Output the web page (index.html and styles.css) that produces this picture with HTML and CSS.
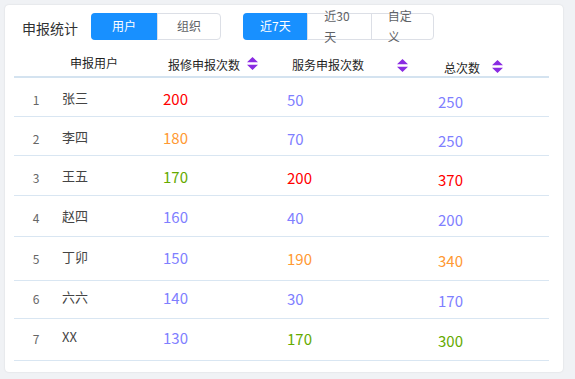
FILE: index.html
```html
<!DOCTYPE html>
<html lang="zh">
<head>
<meta charset="utf-8">
<link rel="stylesheet" href="styles.css">
</head>
<body>
<div class="card">
  <div class="toolbar">
    <div class="title">申报统计</div>
    <div class="seg seg-type">
      <div class="seg-btn active">用户</div>
      <div class="seg-btn">组织</div>
    </div>
    <div class="seg seg-range">
      <div class="seg-btn active">近7天</div>
      <div class="seg-btn">近30天</div>
      <div class="seg-btn">自定义</div>
    </div>
  </div>
  <div class="table">
    <div class="thead">
      <div class="th c-idx"></div>
      <div class="th c-name">申报用户</div>
      <div class="th c-a">报修申报次数<svg class="sort" viewBox="0 0 11 13"><path d="M5.5 0 L11 5.2 L0 5.2 Z M0 7.8 L11 7.8 L5.5 13 Z"/></svg></div>
      <div class="th c-b">服务申报次数<svg class="sort" viewBox="0 0 11 13"><path d="M5.5 0 L11 5.2 L0 5.2 Z M0 7.8 L11 7.8 L5.5 13 Z"/></svg></div>
      <div class="th c-c">总次数<svg class="sort" viewBox="0 0 11 13"><path d="M5.5 0 L11 5.2 L0 5.2 Z M0 7.8 L11 7.8 L5.5 13 Z"/></svg></div>
    </div>
    <div class="row">
      <div class="td c-idx">1</div><div class="td c-name">张三</div>
      <div class="td c-a red">200</div><div class="td c-b blue">50</div><div class="td c-c blue">250</div>
    </div>
    <div class="row">
      <div class="td c-idx">2</div><div class="td c-name">李四</div>
      <div class="td c-a orange">180</div><div class="td c-b blue">70</div><div class="td c-c blue">250</div>
    </div>
    <div class="row">
      <div class="td c-idx">3</div><div class="td c-name">王五</div>
      <div class="td c-a green">170</div><div class="td c-b red">200</div><div class="td c-c red">370</div>
    </div>
    <div class="row">
      <div class="td c-idx">4</div><div class="td c-name">赵四</div>
      <div class="td c-a blue">160</div><div class="td c-b blue">40</div><div class="td c-c blue">200</div>
    </div>
    <div class="row">
      <div class="td c-idx">5</div><div class="td c-name">丁卯</div>
      <div class="td c-a blue">150</div><div class="td c-b orange">190</div><div class="td c-c orange">340</div>
    </div>
    <div class="row">
      <div class="td c-idx">6</div><div class="td c-name">六六</div>
      <div class="td c-a blue">140</div><div class="td c-b blue">30</div><div class="td c-c blue">170</div>
    </div>
    <div class="row">
      <div class="td c-idx">7</div><div class="td c-name">XX</div>
      <div class="td c-a blue">130</div><div class="td c-b green">170</div><div class="td c-c green">300</div>
    </div>
  </div>
</div>
</body>
</html>
```
FILE: styles.css
```css
* { box-sizing: border-box; }
html, body { margin: 0; padding: 0; }
body {
  background: #f0f2f5;
  font-family: "Noto Sans CJK SC", "Noto Sans", sans-serif;
  padding: 5px;
}
.card {
  width: 558px;
  height: 367px;
  background: #fff;
  border-radius: 4px;
  box-shadow: 0 0 2px rgba(0, 0, 0, 0.12);
  padding: 8px 14px 0 9px;
}
.toolbar {
  display: flex;
  align-items: center;
  height: 27px;
}
.title {
  margin-left: 8px;
  margin-top: 3px;
  font-size: 14px;
  color: #303133;
  width: 69px;
}
.seg {
  display: flex;
  height: 27px;
  border: 1px solid #dcdfe6;
  border-radius: 4px;
  overflow: visible;
}
.seg-type { width: 130px; }
.seg-range { margin-left: 22px; width: 191px; }
.seg-btn {
  display: flex;
  align-items: center;
  font-size: 12px;
  line-height: 20.5px;
  color: #606266;
  border-left: 1px solid #dcdfe6;
}
.seg-btn:first-child { border-left: none; }
.seg-btn.active {
  background: #1890ff;
  color: #fff;
  margin: -1px 0 -1px -1px;
  border-radius: 4px 0 0 4px;
}
.seg-type .seg-btn { justify-content: center; }
.seg-type .seg-btn.active { width: 67px; }
.seg-type .seg-btn:last-child { width: 64px; }
.seg-range .seg-btn {
  width: 64px;
  padding: 0 15px 0 16px;
}
.seg-range .seg-btn.active { width: 65px; padding-left: 17px; }
.seg-range .seg-btn:last-child { width: 63px; }

.table { width: 535px; }
.thead {
  display: flex;
  height: 38px;
  border-bottom: 2px solid #d4e3f0;
}
.row {
  display: flex;
  height: 39px;
  border-bottom: 1px solid #d9e6f2;
}
.row:nth-child(4) { height: 40px; }
.row:nth-child(5) { height: 41px; }
.row:nth-child(6) { height: 44px; }
.row:nth-child(7) { height: 38px; }
.row:nth-child(8) { height: 42px; }
.row:nth-child(7) .td { margin-top: -4px; }
.row:nth-child(8) .td { margin-top: -2px; }

.c-idx { width: 44px; text-align: center; }
.c-name { width: 100px; }
.c-a { width: 124px; }
.c-b { width: 151px; }
.c-c { width: 116px; }

.th {
  display: flex;
  align-items: center;
  font-size: 12px;
  line-height: 20px;
  color: #1f1f1f;
  height: 20px;
}
.th.c-name { padding-left: 12px; margin-top: 13px; }
.th.c-a { padding-left: 10px; margin-top: 15px; }
.th.c-b { padding-left: 10px; margin-top: 15px; }
.th.c-c { padding-left: 11px; margin-top: 18px; }
.sort { width: 11px; height: 13px; fill: #8a2be2; flex: none; }
.c-a .sort { margin-left: 7px; margin-top: -4px; }
.c-b .sort { margin-left: 33px; }
.c-c .sort { margin-left: 12px; margin-top: -3px; }

.td { line-height: 20px; }
.td.c-idx { font-size: 12px; color: #666; padding-top: 12px; }
.td.c-name { font-size: 13px; color: #444; padding-left: 4px; padding-top: 10px; }
.td.c-a { font-size: 15px; padding-left: 5px; padding-top: 11px; }
.td.c-b { font-size: 15px; padding-left: 5px; padding-top: 12px; }
.td.c-c { font-size: 15px; padding-left: 5px; padding-top: 14px; }

.red { color: #ff0000; }
.orange { color: #ff9933; }
.green { color: #66aa00; }
.blue { color: #7f7fff; }
```
